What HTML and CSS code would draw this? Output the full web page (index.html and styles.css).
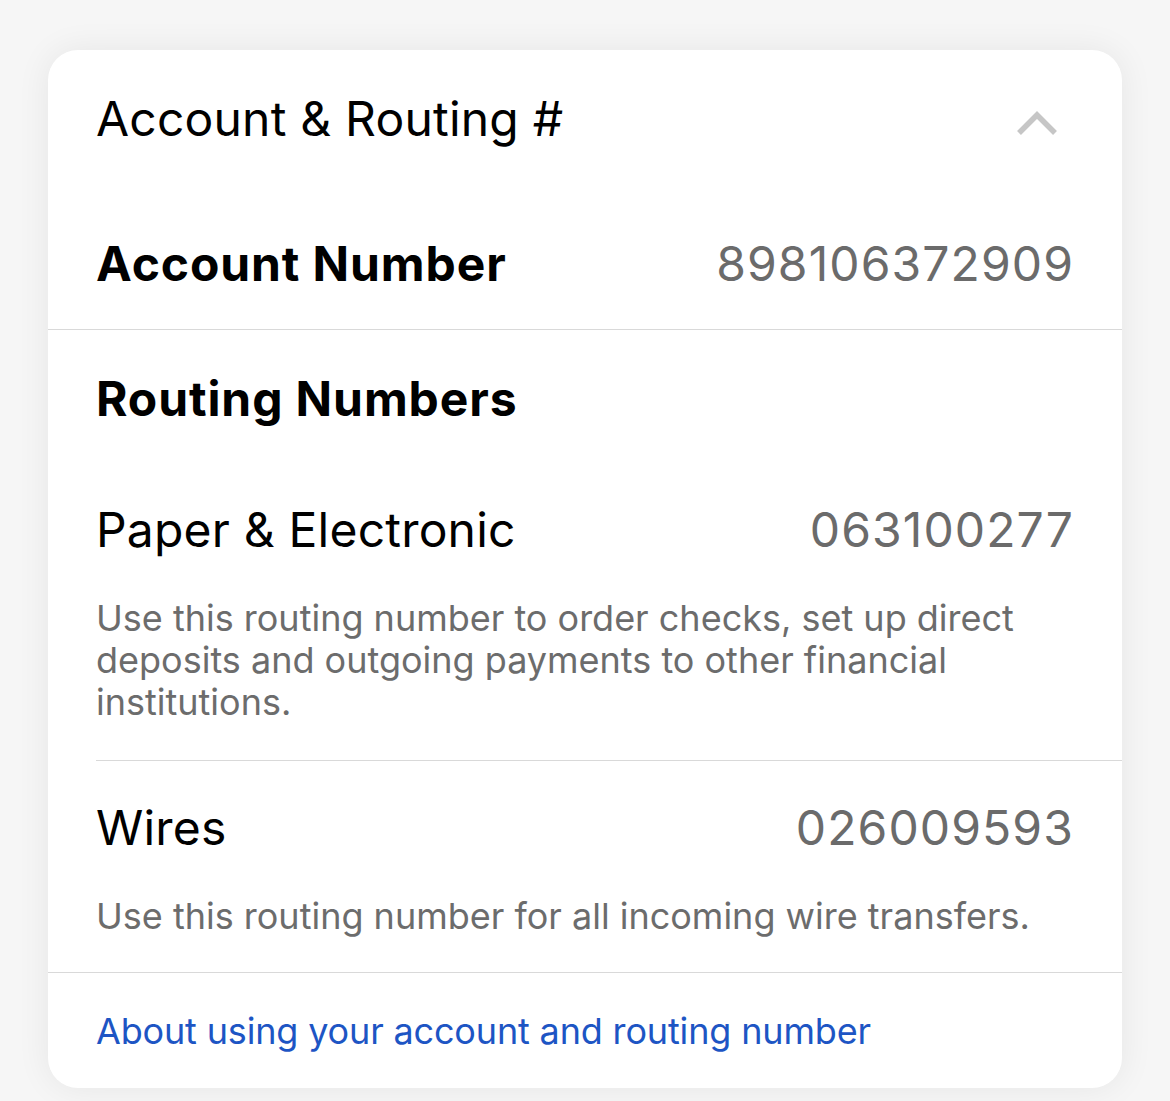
FILE: index.html
```html
<!DOCTYPE html>
<html lang="en">
<head>
<meta charset="utf-8">
<title>Account &amp; Routing</title>
<link rel="stylesheet" href="styles.css">
</head>
<body>
<div class="card">
  <div class="header">
    <span class="title">Account &amp; Routing #</span>
    <svg class="chevron" width="44" height="28" viewBox="0 0 44 28" aria-hidden="true">
      <polyline points="4,23 22,5 40,23" fill="none" stroke="#c6c6c6" stroke-width="5.5"/>
    </svg>
  </div>
  <div class="row account">
    <span class="label-bold">Account Number</span>
    <span class="value">898106372909</span>
  </div>
  <div class="routing">
    <div class="section-title">Routing Numbers</div>
    <div class="item first">
      <div class="item-row">
        <span class="label">Paper &amp; Electronic</span>
        <span class="value">063100277</span>
      </div>
      <p class="desc">Use this routing number to order checks, set up direct deposits and outgoing payments to other financial institutions.</p>
    </div>
    <div class="item second">
      <div class="item-row">
        <span class="label">Wires</span>
        <span class="value">026009593</span>
      </div>
      <p class="desc">Use this routing number for all incoming wire transfers.</p>
    </div>
  </div>
  <div class="footer">
    <a class="link" href="#">About using your account and routing number</a>
  </div>
</div>
</body>
</html>
```
FILE: styles.css
```css
html, body {
  margin: 0;
  padding: 0;
}
body {
  width: 1170px;
  height: 1101px;
  background: #f6f6f6;
  font-family: Inter, "Noto Sans", sans-serif;
  overflow: hidden;
}
.card {
  margin: 50px 0 0 48px;
  width: 1074px;
  height: 1038px;
  background: #ffffff;
  border-radius: 30px;
  box-shadow: 0 0 34px rgba(0, 0, 0, 0.07);
  overflow: hidden;
}
.header {
  display: flex;
  justify-content: space-between;
  align-items: center;
  padding: 40px 63px 0 48px;
  height: 58px;
}
.title {
  font-size: 48px;
  line-height: 58px;
  letter-spacing: 0.2px;
  color: #000;
}
.chevron {
  display: block;
  margin-top: 10px;
}
.row {
  display: flex;
  justify-content: space-between;
  align-items: baseline;
}
.account {
  padding: 87px 49px 36px 48px;
  border-bottom: 1px solid #d9d9d9;
}
.label-bold, .section-title {
  font-size: 48px;
  line-height: 58px;
  font-weight: 700;
  letter-spacing: 0.9px;
  color: #000;
}
.value {
  font-size: 48px;
  line-height: 58px;
  letter-spacing: 1.1px;
  margin-right: -1px;
  color: #6b6b6b;
}
.routing {
  padding-left: 48px;
}
.section-title {
  padding-top: 40px;
}
.item {
  padding-right: 49px;
}
.item.first {
  padding-top: 73px;
  padding-bottom: 37px;
  border-bottom: 1px solid #d9d9d9;
}
.item.second {
  padding-top: 38px;
  padding-bottom: 35px;
}
.item-row {
  display: flex;
  justify-content: space-between;
  align-items: baseline;
}
.label {
  font-size: 48px;
  line-height: 58px;
  letter-spacing: 0.2px;
  color: #000;
}
.desc {
  margin: 38px 0 0;
  font-size: 36px;
  line-height: 42px;
  color: #6c6c6c;
}
.footer {
  border-top: 1px solid #d9d9d9;
  padding: 37px 48px;
}
.link {
  font-size: 36px;
  line-height: 42px;
  letter-spacing: -0.16px;
  color: #1d55c4;
  text-decoration: none;
}
```
